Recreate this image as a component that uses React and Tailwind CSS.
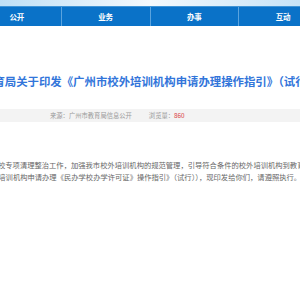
export default function App() {
  const nav = ['公开', '业务', '办事', '互动'];

  return (
    <div
      className="w-[300px] h-[300px] overflow-hidden bg-white"
      style={{ fontFamily: '"Noto Sans CJK SC", "Liberation Sans", sans-serif' }}
    >
      {/* banner strip */}
      <div className="h-[6px] bg-gradient-to-r from-[#bfe0f6] via-[#f4f9fd] to-[#c6e3f7]" />

      {/* nav bar */}
      <div className="flex justify-center h-[20px] bg-[#0a72c8] border-t border-[#3f94d6]">
        <div className="flex shrink-0 w-[354px]">
          {nav.map((item, i) => (
            <div
              key={item}
              className={`flex-1 flex items-center justify-center text-white font-bold text-[7.5px] ${
                i < nav.length - 1 ? 'border-r border-[#5aa3de]' : ''
              }`}
            >
              {item}
            </div>
          ))}
        </div>
      </div>

      {/* title */}
      <div className="flex justify-center mt-[48px]">
        <h1 className="shrink-0 whitespace-nowrap text-[11.4px] leading-[15px] font-bold text-[#3275da]">
          广州市教育局关于印发《广州市校外培训机构申请办理操作指引》（试行）的通知
        </h1>
      </div>

      {/* meta */}
      <div className="mt-[20px] h-[13px] bg-[#f3f3f3] flex items-center text-[6.3px] text-[#9a9a9a]">
        <span className="ml-[50px]">来源：广州市教育局信息公开</span>
        <span className="ml-[17px]">
          浏览量：<span className="text-[#d9393b]">860</span>
        </span>
      </div>

      {/* body */}
      <div className="mt-[37px] ml-[-2px] text-[7.3px] leading-[12px] text-[#666] whitespace-pre">
        <p>校专项清理整治工作，加强我市校外培训机构的规范管理，引导符合条件的校外培训机构到教育行政部门</p>
        <p className="ml-[-7px]">外培训机构申请办理《民办学校办学许可证》操作指引》（试行）），现印发给你们，请遵照执行。</p>
      </div>
    </div>
  );
}
